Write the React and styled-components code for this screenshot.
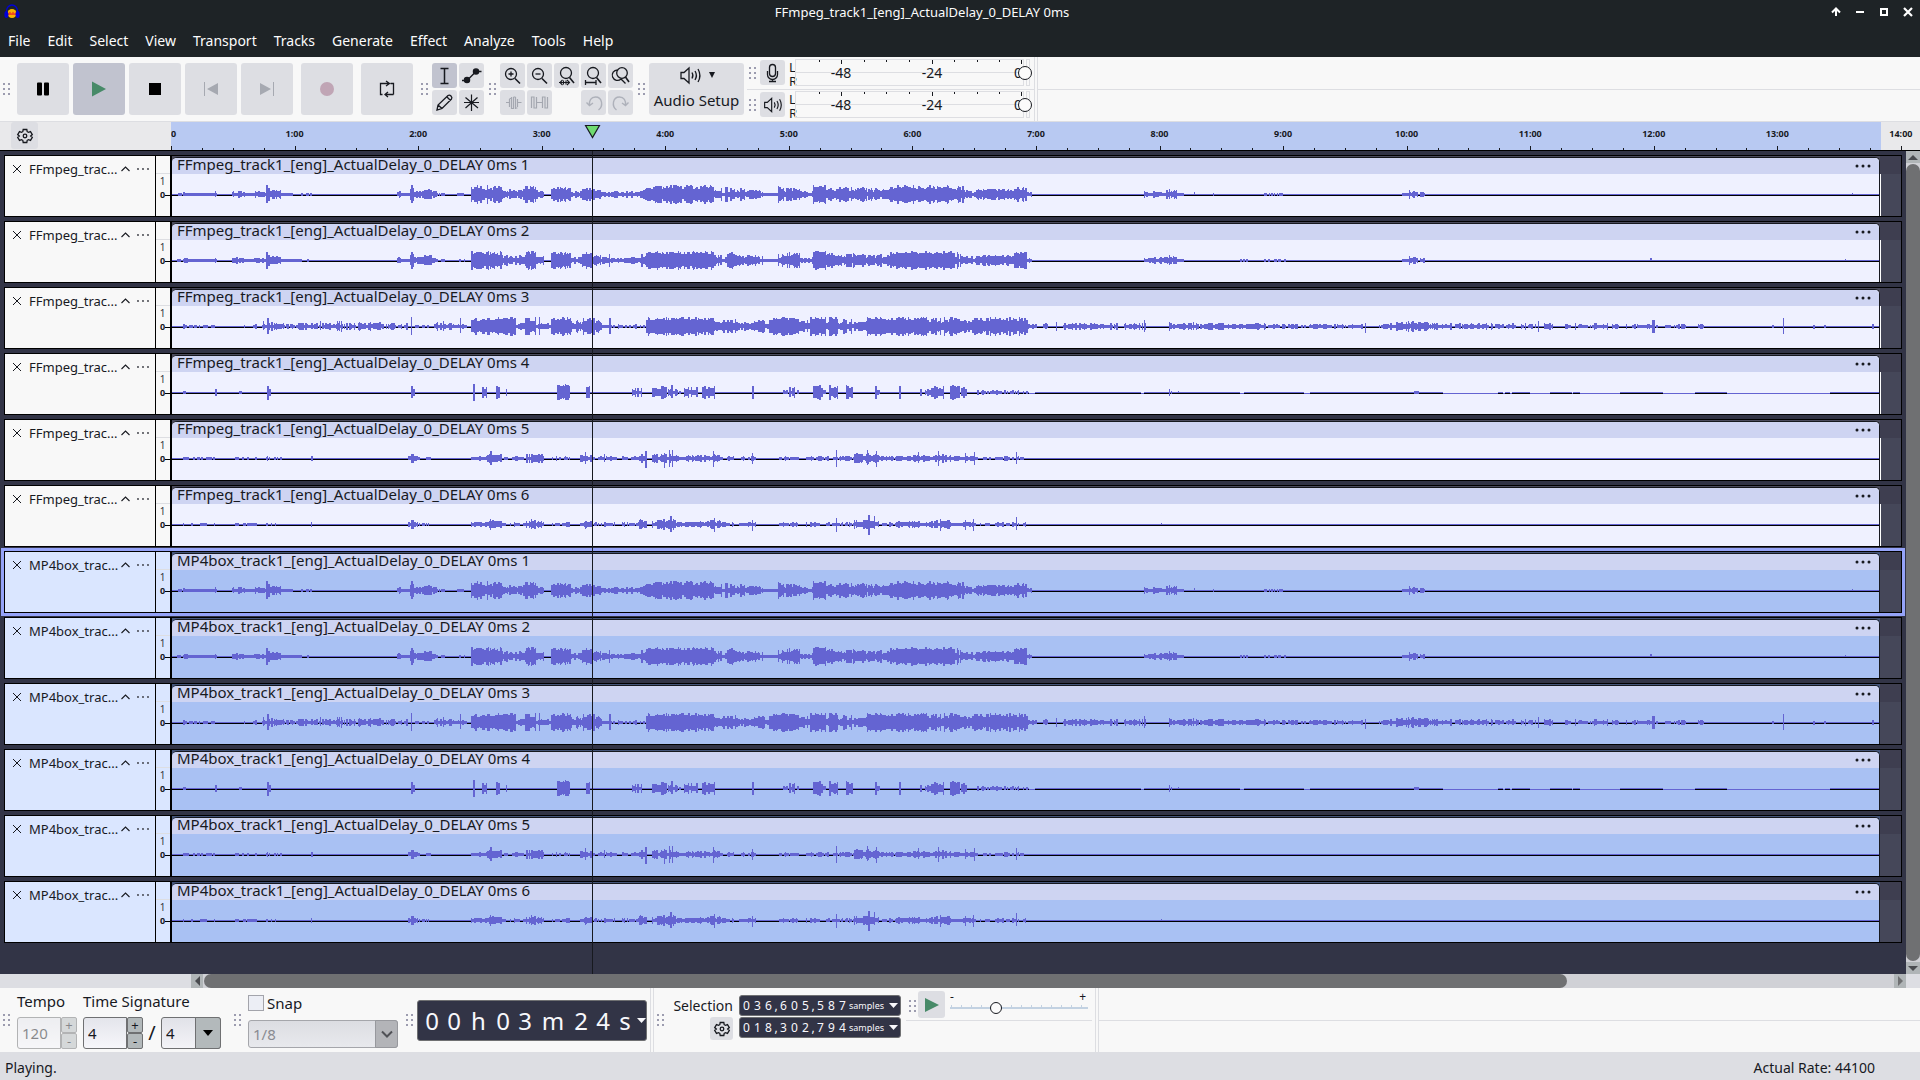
import React from "react";
import styled, { createGlobalStyle, css } from "styled-components";

const FONT = '"Noto Sans", "Open Sans", sans-serif';

const GlobalStyle = createGlobalStyle`
  * { box-sizing: border-box; }
  body { margin: 0; font-family: ${FONT}; font-size: 15px; color: #17191f; background: #f8f8f8; }
  button, input, select { font: inherit; color: inherit; margin: 0; padding: 0; border: 0; background: none; border-radius: 0; }
  svg { display: block; }
`;

/* ---------- window frame ---------- */

const Window = styled.div`
  display: flex;
  flex-direction: column;
  height: 100vh;
  overflow: hidden;
`;

const TitleBar = styled.header`
  display: flex;
  align-items: center;
  height: 24px;
  padding-left: 4px;
  background: #1e2326;
  color: #fcfcfc;
`;

const WindowTitle = styled.h1`
  flex: 1;
  margin: 0;
  font-size: 13px;
  line-height: 24px;
  font-weight: 400;
  text-align: center;
`;

const WindowButtons = styled.div`
  display: flex;
`;

const WindowButton = styled.button`
  display: grid;
  place-items: center;
  width: 24px;
  height: 24px;
`;

const MenuBar = styled.nav`
  display: flex;
  gap: 17px;
  height: 33px;
  padding: 0 8px;
  background: #1e2326;
  color: #fcfcfc;
`;

const MenuItem = styled.button`
  font-size: 14px;
  line-height: 33px;
`;

/* ---------- toolbars ---------- */

const Toolbars = styled.section`
  display: flex;
  height: 65px;
  background: #f8f8f8;
  border-bottom: 1px solid #dddee2;
`;

const GripBox = styled.span`
  display: grid;
  grid-template-columns: 2px 2px;
  grid-auto-rows: 2px;
  gap: 3px;
  flex: none;
  align-self: center;
  i { background: #9c9caf; }
`;

const Grip = () => (
  <GripBox aria-hidden="true">
    <i /><i /><i /><i /><i /><i />
  </GripBox>
);

const ToolGroup = styled.div`
  display: flex;
  align-items: center;
  gap: ${(p) => p.$gap || 7}px;
  padding-left: ${(p) => p.$left || 3}px;
`;

const ButtonRow = styled.div`
  display: flex;
  gap: ${(p) => p.$gap}px;
`;

const PadButton = styled.button`
  display: grid;
  place-items: center;
  flex: none;
  width: ${(p) => p.$size}px;
  height: ${(p) => p.$size}px;
  background: ${(p) => (p.$on ? "#c1c3cf" : "#dddee3")};
  border-radius: 3px;
`;

const ToolGrid = styled.div`
  display: grid;
  grid-template-columns: repeat(${(p) => p.$cols}, 25px);
  gap: 2px;
`;

const AudioSetup = styled.button`
  display: flex;
  flex-direction: column;
  align-items: center;
  justify-content: space-between;
  width: 95px;
  height: 52px;
  padding: 2px 0 3px;
  background: #dddee3;
  border-radius: 3px;
  font-size: 15px;
  line-height: 24px;
`;

const AudioIcons = styled.span`
  display: flex;
  align-items: center;
  gap: 6px;
  height: 20px;
`;

const MeterColumn = styled.div`
  display: flex;
  flex-direction: column;
  margin-left: 3px;
  border-right: 1px solid #dddee2;
`;

const MeterRow = styled.div`
  display: flex;
  align-items: center;
  gap: 4px;
  height: ${(p) => (p.$top ? 33 : 31)}px;
  padding: 0 4px ${(p) => (p.$top ? 1 : 2)}px 2px;
  border-bottom: ${(p) => (p.$top ? "1px solid #dddee2" : "0")};
`;

const Channels = styled.span`
  display: flex;
  flex-direction: column;
  width: 6px;
  padding-top: 2px;
  font-size: 13px;
  line-height: 14px;
`;

const MeterBox = styled.div`
  display: grid;
  grid-template-columns: 229px 4px;
  column-gap: 2px;
  height: 27px;
  & > * { border: 1px solid #dddee2; }
`;

const MeterScale = styled.div`
  display: grid;
  svg, div { grid-area: 1 / 1; }
`;

const MeterLabels = styled.div`
  display: flex;
  padding-left: 25px;
  line-height: 25px;
  font-size: 14px;
  span { width: 40px; margin-right: 51px; text-align: center; }
  span:last-child { width: 10px; margin-right: 0; margin-left: 10px; }
`;

const MeterGroup = styled.div`
  display: grid;
  & > * { grid-area: 1 / 1; }
`;

const GainSlider = styled.input`
  appearance: none;
  align-self: center;
  justify-self: end;
  width: 237px;
  height: 14px;
  margin-right: -2px;
  &::-webkit-slider-thumb {
    appearance: none;
    width: 14px;
    height: 14px;
    border: 1px solid #17191f;
    border-radius: 50%;
    background: #fbfbfb;
  }
`;

const Filler = styled.div`
  flex: 1;
  margin-left: ${(p) => (p.$flush ? 0 : 2)}px;
  border-left: ${(p) => (p.$flush ? 0 : 1)}px solid #dddee2;
  background: linear-gradient(#dddee2, #dddee2) 0 32px / 100% 1px no-repeat;
`;

/* ---------- timeline ---------- */

const Timeline = styled.section`
  display: flex;
  position: relative;
  height: 29px;
  background: #e9e9eb;
  border-bottom: 1px solid #000;
`;

const TimelineCorner = styled.div`
  display: flex;
  align-items: flex-start;
  flex: 0 0 171px;
  padding-left: 11px;
`;

const Ruler = styled.div`
  display: flex;
  flex: 1;
  overflow: hidden;
  background: linear-gradient(to right, #b8c9f2 calc(100% - 39px), #e9e9eb 0);
`;

const Minute = styled.div`
  display: flex;
  flex-direction: column;
  justify-content: space-between;
  flex: 0 0 calc(100% / 14.154);
  font-size: 9px;
  font-weight: 700;
`;

const MinuteLabel = styled.span`
  width: 40px;
  margin-left: -20px;
  line-height: 24px;
  text-align: center;
`;

const FirstLabel = styled(MinuteLabel)`
  margin-left: 0;
  text-align: left;
`;

const Ticks = styled.div`
  display: grid;
  grid-template-columns: repeat(4, 1fr);
  align-items: end;
  height: 5px;
  i { height: 3px; border-left: 1px solid #17191f; }
  i:first-child { height: 5px; }
`;

const playX = css`calc(172px + (100% - 172px) * 0.2403)`;

const PlayHandle = styled.svg`
  position: absolute;
  left: ${playX};
  top: 3px;
  margin-left: -8px;
`;

/* ---------- tracks ---------- */

const TrackArea = styled.main`
  display: flex;
  position: relative;
  flex: 1;
  min-height: 0;
  background: #323446;
`;

const TrackList = styled.div`
  display: flex;
  flex-direction: column;
  gap: 4px;
  flex: 1;
  min-width: 0;
  padding: 4px;
  overflow: hidden;
`;

const PlayLine = styled.div`
  position: absolute;
  left: ${playX};
  top: 0;
  bottom: 0;
  width: 1px;
  background: #17191f;
`;

const Track = styled.article`
  display: flex;
  flex: none;
  height: 62px;
  border: 1px solid #000;
  box-shadow: ${(p) => (p.$focused ? "0 0 0 3px #95a3f8" : "none")};
`;

const TrackPanel = styled.div`
  display: flex;
  align-items: flex-start;
  flex: 0 0 151px;
  padding: 3px 0 0 5px;
  background: ${(p) => (p.$selected ? "#dae6ff" : "#f8f8f8")};
  border-right: 1px solid #000;
  font-size: 13px;
  line-height: 20px;
`;

const PanelButton = styled.button`
  display: grid;
  place-items: center;
  width: ${(p) => p.$w}px;
  height: 20px;
`;

const TrackName = styled.span`
  width: 92px;
  margin-left: 6px;
  white-space: nowrap;
`;

const VRuler = styled.div`
  display: flex;
  flex-direction: column;
  flex: 0 0 16px;
  padding-top: 17px;
  background: ${(p) => (p.$selected ? "#dae6ff" : "#f8f8f8")};
  border-right: 2px solid #000;
`;

const VOne = styled.span`
  border-top: 1px solid #dddee2;
  padding-right: 1px;
  font-size: 10px;
  line-height: 14px;
  text-align: center;
  color: #33353d;
`;

const VZero = styled.span`
  display: flex;
  align-items: center;
  padding-left: 4px;
  font-size: 9px;
  line-height: 14px;
  font-weight: 700;
  &::after { content: ""; flex: 1; height: 1px; background: #000; }
`;

const ClipLane = styled.div`
  display: flex;
  flex: 1;
  min-width: 0;
  padding-top: 1px;
  background: ${(p) => (p.$selected ? "#45557a" : "#4b4b5c")};
`;

const Clip = styled.div`
  display: flex;
  flex-direction: column;
  flex: 1;
  min-width: 0;
  border: solid #17191f;
  border-width: 1px 1px 0 0;
  border-radius: 5px 5px 0 0;
  overflow: hidden;
  background: ${(p) => (p.$selected ? "#a9c1f3" : "#eff1ff")};
`;

const ClipHeader = styled.div`
  display: flex;
  justify-content: space-between;
  height: 16px;
  padding: 0 7px 0 5px;
  overflow: hidden;
  background: #ced4f2;
  font-size: 15px;
  line-height: 12px;
  white-space: nowrap;
`;

const ClipMenu = styled.button`
  display: grid;
  place-items: center;
  width: 18px;
  height: 16px;
`;

const Void = styled.div`
  flex: 0 0 21px;
  margin-top: -1px;
  background:
    linear-gradient(${(p) => (p.$selected ? "#454759, #454759" : "#ffffff, #ffffff")}) 0 18px / 1px 100% no-repeat,
    linear-gradient(#3e3e50 18px, #454759 0);
`;

const Wave = styled.svg`
  width: 100%;
  height: 42px;
`;

/* ---------- scroll bars ---------- */

const VScroll = styled.div`
  display: flex;
  flex-direction: column;
  gap: 1px;
  flex: 0 0 14px;
  background: #d0d1d6;
`;

const HScroll = styled.div`
  display: flex;
  gap: 1px;
  flex: 0 0 14px;
  padding: 0 14px 0 191px;
  background: linear-gradient(to right, #dddee3 191px, #d0d1d6 0, #d0d1d6 calc(100% - 14px), #dddee3 0);
`;

const ScrollArrow = styled.button`
  display: grid;
  place-items: center;
  flex: 0 0 12px;
  background: #b0b5b7;
`;

const ScrollThumb = styled.div`
  flex: ${(p) => p.$grow || 1};
  border-radius: 7px;
  background: #6f7072;
`;

const ScrollRest = styled.div`
  flex: ${(p) => p.$grow};
`;

/* ---------- bottom bar ---------- */

const BottomBar = styled.section`
  display: flex;
  flex: 0 0 64px;
  background: #f8f8f8;
`;

const Field = styled.div`
  display: flex;
  flex-direction: column;
  gap: 3px;
  padding-bottom: 3px;
  align-self: flex-end;
  font-size: 15px;
  line-height: 26px;
`;

const Inline = styled.div`
  display: flex;
  align-items: center;
  gap: ${(p) => p.$gap || 0}px;
`;

const Spin = styled.div`
  display: grid;
  grid-template-columns: 44px 16px;
  grid-template-rows: 16px 16px;
  opacity: ${(p) => (p.$disabled ? 0.5 : 1)};
`;

const SpinInput = styled.input`
  grid-row: 1 / 3;
  min-width: 0;
  padding-left: 4px;
  border: 1px solid #6f7072;
  border-radius: 3px 0 0 3px;
  background: linear-gradient(#e4e5eb, #f6f6fa);
`;

const SpinButton = styled.button`
  border: 1px solid #6f7072;
  border-radius: 2px;
  background: #b3b9bb;
  font-size: 13px;
  line-height: 12px;
`;

const Slash = styled.span`
  width: 8px;
  font-size: 20px;
  text-align: center;
`;

const Combo = styled.div`
  display: grid;
  width: ${(p) => p.$w}px;
  height: ${(p) => p.$h}px;
  & > * { grid-area: 1 / 1; }
`;

const ComboSelect = styled.select`
  appearance: none;
  padding-left: 4px;
  border: 1px solid ${(p) => (p.disabled ? "#a5a6ab" : "#6f7072")};
  border-radius: 3px;
  background: ${(p) => (p.disabled ? "linear-gradient(#dcdde2, #e8e9ed)" : "linear-gradient(#e1e2e8, #f3f3f7)")};
  color: ${(p) => (p.disabled ? "#8a8b91" : "#17191f")};
  opacity: 1;
`;

const ComboArrow = styled.span`
  display: grid;
  place-items: center;
  justify-self: end;
  width: ${(p) => p.$w}px;
  border: 1px solid ${(p) => (p.$flat ? "#97989d" : "#6f7072")};
  border-radius: 0 3px 3px 0;
  background: ${(p) => (p.$flat ? "#b3b4b8" : "#b3b9bb")};
  pointer-events: none;
`;

const SnapGroup = styled.div`
  display: flex;
  flex-direction: column;
  gap: 8px;
  align-self: flex-end;
  padding-bottom: 4px;
`;

const SnapLabel = styled.label`
  display: flex;
  align-items: center;
  gap: 3px;
  height: 18px;
  font-size: 15px;
`;

const Check = styled.input`
  appearance: none;
  width: 16px;
  height: 16px;
  border: 1px solid #a3a4ab;
  background: #eceef5;
`;

const TimeBox = styled.div`
  display: flex;
  align-items: center;
  align-self: center;
  width: 230px;
  height: 41px;
  padding-left: 3px;
  border: 1px solid #6f7072;
  border-radius: 3px;
  background: #323446;
  color: #f8f8fc;
  font-size: 24px;
  line-height: 39px;
`;

const Cell = styled.span`
  flex: 0 0 ${(p) => p.$w}px;
  text-align: center;
`;

const TimeArrow = styled.button`
  display: grid;
  place-items: center;
  width: 10px;
  height: 100%;
`;

const Divider = styled.div`
  width: 4px;
  margin-left: 3px;
  border: solid #dddee2;
  border-width: 0 1px;
`;

const SelectionGroup = styled.div`
  display: flex;
  align-items: flex-start;
  align-self: flex-start;
  gap: 6px;
  padding-top: 7px;
`;

const SelectionLabels = styled.div`
  display: flex;
  flex-direction: column;
  align-items: flex-end;
  width: 62px;
  font-size: 14px;
  line-height: 22px;
`;

const SampleStack = styled.div`
  display: flex;
  flex-direction: column;
  gap: 1px;
`;

const SampleBox = styled.div`
  display: flex;
  align-items: center;
  width: 162px;
  height: 21px;
  padding: 0 2px 0 1px;
  border: 1px solid #6f7072;
  border-radius: 3px;
  background: #323446;
  color: #f8f8fc;
  font-size: 12px;
  line-height: 19px;
`;

const Unit = styled.span`
  flex: 1;
  padding-left: 1px;
  font-size: 9px;
  line-height: 22px;
`;

const SpeedGroup = styled.div`
  display: flex;
  align-items: flex-start;
  gap: 2px;
  height: 33px;
  margin-left: 5px;
  padding: 3px 4px 0 3px;
  border-bottom: 1px solid #dddee2;
`;

const SpeedSlider = styled.div`
  display: flex;
  flex-direction: column;
  width: 138px;
  margin-left: 3px;
  padding-top: 1px;
`;

const SpeedEnds = styled.div`
  display: flex;
  justify-content: space-between;
  padding-right: 2px;
  font-size: 12px;
  line-height: 10px;
`;

const SpeedInput = styled.input`
  appearance: none;
  width: 100%;
  height: 12px;
  background:
    linear-gradient(#c3d2e2, #c3d2e2) 0 5px / 100% 2px no-repeat,
    repeating-linear-gradient(to right, #c3d2e2 0 1px, transparent 1px 10px) 1px 3px / 100% 3px no-repeat;
  &::-webkit-slider-thumb {
    appearance: none;
    width: 12px;
    height: 12px;
    border: 1px solid #17191f;
    border-radius: 50%;
    background: #fbfbfb;
  }
`;

const StatusBar = styled.footer`
  display: flex;
  justify-content: space-between;
  flex: 0 0 28px;
  padding: 3px 45px 0 5px;
  background: #dddee3;
  font-size: 14px;
  line-height: 25px;
`;

/* ---------- icons ---------- */

const Line = ({ s = 25, c = "#17191f", w = 1.3, children }) => (
  <svg width={s} height={s} viewBox={`0 0 ${s} ${s}`} fill="none" stroke={c} strokeWidth={w}>
    {children}
  </svg>
);

const Lens = () => <><circle cx="12" cy="10" r="5.5" /><path d="M15.5 14.5L20 20" strokeWidth="1.6" /></>;

const ICONS = {
  ibeam: <Line w={1.5}><path d="M8.5 5.5h8M8.5 20.5h8M12.5 5.5v15" /></Line>,
  envelope: <Line><path d="M3 17.5h5L17 8.5h5.5" /><circle cx="8" cy="17" r="2.6" fill="#17191f" /><circle cx="17" cy="8.5" r="2.6" fill="#17191f" /></Line>,
  pencil: <Line><path d="M5 20l1-5L16 5.5q1.5-1 3 .5t.5 3L10 18.5zM6 15l4 3.5M15 7l3.5 3.5" /></Line>,
  star: <Line w={1.2}><path d="M12.5 4.5v16.5M5 12.5h15M6.5 7.5l12.5 10.5M18.5 7.5L6.5 18" /></Line>,
  zoomIn: <Line><circle cx="11" cy="11" r="5.5" /><path d="M15 15.5l5 5" strokeWidth="1.6" /><path d="M11 8.5v5M8.5 11h5" /></Line>,
  zoomOut: <Line><circle cx="11" cy="11" r="5.5" /><path d="M15 15.5l5 5" strokeWidth="1.6" /><path d="M8.5 11h5" /></Line>,
  zoomSel: <Line><Lens /><path d="M5 19.5h11M8.5 17l-2.5 2.5 2.5 2.5M13 17l2.5 2.5L13 22M9.5 17.5v4M12 17.5v4" strokeWidth="1.1" /></Line>,
  zoomFit: <Line><Lens /><path d="M4.5 19.5H15M4.5 17v5M15 17v5" /></Line>,
  zoomToggle: <Line><circle cx="14" cy="10" r="5.3" /><path d="M17.5 14l3.5 5" strokeWidth="1.6" /><path d="M9.5 7A5.200 5.200 0 1 0 13 16l4.5 4.5" /></Line>,
  trim: <Line c="#a4a7b0" w={1.2}><path d="M6 12.5h3.5M18 12.5h3.5M9.5 9v8M11.5 7v12M13.5 7v12M15.5 7v12M17.5 9v8M9.5 8.5h2M13.5 7h2M11.5 18.5h2M15.5 18h2" /></Line>,
  silence: <Line c="#a4a7b0" w={1.2}><path d="M4.5 18V7h2.5v11h2.5V7M9.500 12.500h6M15.500 18V7h2.500v11h2.500V7" /></Line>,
  undo: <Line c="#aeb1ba" w={1.4}><path d="M17.5 20c5-3.5 4-13-3-13-4.5 0-6.5 3.5-6 8M5.5 12.5l3 3 3.5-2.5" /></Line>,
  redo: <Line c="#aeb1ba" w={1.4}><path d="M8.5 20c-5-3.5-4-13 3-13 4.5 0 6.5 3.5 6 8M20.5 12.5l-3 3-3.5-2.5" /></Line>,
  mic: <Line><rect x="9.5" y="4.5" width="6" height="12" rx="3" /><path d="M7.5 11v3.5a5 5 0 0 0 10 0V11M12.5 19.5v2M9 21.5h7" /></Line>,
  gear: (
    <Line s={20} w={1.3}>
      <circle cx="10" cy="10" r="1.8" />
      <path d="M8.2 3.5h3.6l.4 2.2 1.3.7 2-.8 1.8 3-1.6 1.4 1.6 1.4-1.8 3-2-.8-1.3.7-.4 2.2H8.2l-.4-2.2-1.3-.7-2 .8-1.8-3L4.300 10 2.700 8.600l1.800-3 2 .8 1.300-.7z" />
    </Line>
  ),
};

const Speaker = ({ s = 25 }) => (
  <svg width={s} height={s} viewBox="0 0 25 25" fill="none" stroke="#17191f" strokeWidth="1.3">
    <path d="M3 9.5h3l5-4.5v15l-5-4.5H3zM14 9.5q1.8 3 0 6M17 8q2.8 4.5 0 9M20 6q3.8 6.5 0 13" />
  </svg>
);

const Triangle = ({ w, h, d, c = "#17191f" }) => (
  <svg width={w} height={h} viewBox={`0 0 ${w} ${h}`}>
    <path d={d} fill={c} />
  </svg>
);

const Down = ({ w = 10, h = 6, c }) => <Triangle w={w} h={h} c={c} d={`M0 0H${w}L${w / 2} ${h}z`} />;

const TRANSPORT = [
  ["Pause", <Triangle w={12} h={14} c="#000" d="M0 1.5q0-1 1-1h3q1 0 1 1v11q0 1-1 1H1q-1 0-1-1zM7 1.5q0-1 1-1h3q1 0 1 1v11q0 1-1 1H8q-1 0-1-1z" />],
  ["Play", <Triangle w={14} h={16} c="#478a68" d="M0 0.5L14 8 0 15.5z" />, true],
  ["Stop", <Triangle w={12} h={12} c="#000" d="M0 0h12v12H0z" />],
  ["Skip to Start", <Triangle w={14} h={14} c="#a6a9b1" d="M0 0h1v14H0zM14 1v12L3 7z" />],
  ["Skip to End", <Triangle w={14} h={14} c="#a6a9b1" d="M13 0h1v14h-1zM0 1v12l11-6z" />],
];

const LoopIcon = () => (
  <Line s={20} w={1.3}>
    <path d="M6.5 4.5h-3v11h2M8 15.5h8.5M13.5 4.5h3v11M6.5 4.5h6M9 2l3.5 2.5L9 7M11 13l-3 2.5 3 2.5" />
  </Line>
);

/* ---------- waveform data ----------
   spans:  [from column, to column, quiet level, loud level]
   spikes: [column, rise, fall, width]
   silent: [from column, to column]                         */

const START = 172;
const COLUMNS = 1707;

const FRONT_LEFT = {
  seed: 7,
  spans: [
    [176, 182, 0, 1], [183, 187, 1, 2], [188, 216, 1, 1], [232, 244, 1, 3], [245, 253, 1, 1], [254, 259, 1, 3], [260, 265, 1, 2],
    [266, 269, 4, 7], [270, 275, 2, 4], [276, 280, 3, 4], [281, 292, 1, 1], [298, 312, 0, 1], [397, 400, 2, 3], [401, 409, 1, 1],
    [410, 413, 4, 6], [414, 421, 2, 3],
    [422, 431, 3, 5], [432, 436, 1, 3], [437, 444, 0, 1], [456, 464, 0, 1],
    [471, 502, 4, 9], [503, 524, 2, 5], [525, 535, 4, 9], [536, 543, 2, 4], [551, 570, 4, 8], [571, 581, 1, 3], [582, 592, 4, 8],
    [593, 600, 3, 5], [601, 640, 1, 3], [641, 645, 3, 6], [646, 713, 5, 9], [714, 721, 2, 7], [722, 724, 1, 1], [725, 733, 2, 8],
    [734, 741, 2, 7], [742, 756, 2, 5], [757, 762, 1, 4], [763, 777, 1, 1], [778, 799, 2, 8], [800, 812, 1, 3], [813, 825, 7, 9],
    [826, 865, 3, 7], [866, 889, 2, 6], [890, 954, 5, 9], [955, 968, 1, 8], [969, 975, 1, 4], [976, 1013, 3, 5], [1014, 1026, 4, 8],
    [1027, 1031, 1, 2], [1144, 1165, 1, 3], [1166, 1176, 2, 4], [1177, 1183, 1, 1], [1264, 1285, 0, 1], [1402, 1408, 1, 1],
    [1409, 1412, 1, 2], [1413, 1417, 2, 3], [1420, 1424, 1, 2],
  ],
  spikes: [[215, 3, 2], [266, 9, 8, 2], [411, 9, 8, 2], [1169, 5, 4], [1194, 2, 0], [1213, 1, 1], [1409, 4, 4], [1852, 1, 0]],
};

const FRONT_RIGHT = {
  seed: 23,
  spans: FRONT_LEFT.spans.map(([a, b, lo, hi]) => [a, b, lo > 3 ? lo + 1 : lo, hi]).concat([[282, 300, 1, 1], [1238, 1247, 0, 1]]),
  spikes: [[215, 2, 2], [266, 8, 8, 2], [411, 8, 8, 2], [609, 6, 6], [1169, 5, 4], [1409, 4, 4], [1650, 2, 0, 2], [1845, 1, 0]],
};

const CENTER = {
  seed: 41,
  spans: [
    [183, 186, 1, 2], [187, 216, 0, 1], [240, 244, 0, 1], [253, 256, 1, 4], [262, 275, 1, 4], [276, 318, 0, 3], [319, 336, 0, 3],
    [337, 342, 1, 5], [343, 357, 0, 3], [358, 380, 1, 4], [381, 407, 0, 3], [413, 433, 0, 1], [434, 448, 0, 4], [449, 466, 0, 3],
    [471, 515, 5, 9], [516, 524, 1, 4], [525, 535, 3, 9], [536, 550, 1, 3], [551, 570, 6, 9], [571, 582, 2, 6], [583, 594, 5, 9],
    [595, 601, 3, 6], [602, 611, 1, 2], [612, 645, 0, 2], [646, 713, 6, 9], [714, 720, 3, 6], [721, 735, 3, 8], [736, 750, 2, 4],
    [751, 768, 2, 8], [769, 780, 5, 8], [781, 798, 6, 9], [799, 809, 1, 6], [810, 825, 6, 9], [826, 828, 2, 4], [829, 837, 7, 9],
    [838, 866, 2, 7], [867, 926, 6, 9], [927, 948, 3, 9], [949, 959, 6, 9], [960, 966, 2, 8], [967, 971, 2, 5], [972, 1027, 5, 9],
    [1028, 1036, 1, 2], [1043, 1047, 1, 3], [1063, 1117, 0, 3], [1123, 1145, 0, 3], [1169, 1193, 1, 4], [1194, 1209, 0, 3],
    [1210, 1223, 1, 4], [1224, 1250, 1, 2], [1251, 1293, 0, 3], [1294, 1365, 0, 2], [1379, 1395, 0, 3], [1396, 1427, 2, 5],
    [1428, 1434, 1, 3], [1435, 1515, 0, 3], [1520, 1535, 0, 3], [1544, 1552, 1, 3], [1565, 1607, 0, 3], [1612, 1619, 0, 2],
    [1632, 1658, 0, 2], [1665, 1685, 0, 2], [1698, 1703, 1, 2],
  ],
  spikes: [
    [263, 5, 3], [267, 8, 7, 2], [320, 5, 3], [337, 5, 4], [411, 9, 8], [443, 5, 4], [460, 8, 6], [539, 9, 8], [609, 8, 7, 2], [1056, 4, 4],
    [1144, 6, 5], [1365, 3, 6], [1538, 5, 5], [1652, 6, 6, 3], [1626, 2, 2], [1772, 1, 1, 2], [1783, 8, 7], [1813, 1, 2, 2],
    [1824, 1, 1, 2], [1872, 2, 2, 2],
  ],
};

const BASS = {
  seed: 59,
  spans: [
    [183, 185, 1, 1], [208, 210, 0, 1], [239, 241, 1, 1], [482, 486, 3, 6], [496, 499, 4, 6], [557, 569, 6, 7], [586, 589, 4, 6],
    [632, 641, 1, 4], [652, 660, 2, 5], [661, 666, 5, 6], [668, 672, 2, 4], [673, 680, 0, 3], [684, 697, 1, 5], [702, 714, 3, 6],
    [783, 798, 0, 5], [813, 820, 6, 7], [821, 825, 2, 5], [829, 837, 3, 7], [846, 852, 3, 7], [876, 879, 2, 3], [920, 926, 0, 3],
    [927, 943, 2, 6], [950, 959, 4, 7], [961, 966, 2, 6], [974, 1027, 0, 2], [1412, 1424, 0, 1],
  ],
  spikes: [
    [215, 3, 3, 2], [267, 6, 7, 2], [269, 3, 3, 2], [411, 6, 5, 2], [413, 3, 3, 2], [473, 8, 8, 2], [506, 3, 3], [565, 8, 7],
    [671, 7, 5, 2], [752, 6, 6, 2], [875, 6, 6, 2], [899, 6, 6, 2], [1169, 3, 3], [1171, 1, 1], [1178, 1, 0],
  ],
  silent: [
    [1029, 1035], [1141, 1144], [1240, 1244], [1304, 1310], [1443, 1498], [1503, 1505], [1510, 1512], [1530, 1550], [1572, 1573],
    [1580, 1620], [1663, 1695], [1727, 1830],
  ],
};

const SURROUND_SPANS = [
  [183, 216, 0, 1], [235, 256, 0, 1], [266, 282, 0, 1], [408, 413, 1, 3], [414, 417, 1, 3], [418, 430, 0, 1], [471, 486, 1, 2],
  [487, 501, 2, 4], [502, 510, 0, 1], [511, 525, 0, 2], [526, 543, 1, 4], [552, 569, 0, 2], [580, 592, 1, 3], [593, 617, 0, 2],
  [622, 638, 0, 2], [639, 646, 1, 5], [652, 677, 1, 5], [678, 706, 1, 3], [707, 720, 1, 4], [721, 733, 0, 2], [739, 755, 0, 2],
  [779, 798, 0, 2], [806, 853, 0, 2], [854, 878, 2, 5], [879, 895, 0, 2], [896, 930, 1, 3], [931, 950, 1, 4], [951, 975, 1, 2],
  [976, 990, 0, 1], [995, 1025, 0, 2],
];

const SURROUND_LEFT = {
  seed: 83,
  spans: SURROUND_SPANS,
  spikes: [
    [311, 2, 2, 2], [267, 2, 2], [411, 4, 4, 3], [490, 7, 6, 2], [531, 4, 4, 2], [585, 6, 5], [604, 4, 3], [645, 7, 9, 2], [664, 5, 9],
    [669, 8, 8], [672, 8, 8], [713, 7, 8], [752, 5, 5], [836, 8, 8], [867, 8, 6], [876, 7, 8], [918, 6, 4], [938, 7, 7], [965, 5, 4],
    [974, 6, 6], [1016, 6, 5],
  ],
};

const SURROUND_RIGHT = {
  seed: 101,
  spans: SURROUND_SPANS,
  spikes: [
    [311, 2, 2], [411, 4, 4, 3], [490, 5, 5], [531, 5, 4], [585, 3, 4], [640, 5, 4], [670, 8, 7, 2], [714, 6, 7], [752, 4, 6],
    [836, 6, 7], [868, 9, 10, 2], [874, 8, 4], [940, 5, 6], [965, 4, 5], [973, 5, 6], [1016, 7, 5], [1161, 1, 0],
  ],
};

function wavePaths({ seed, spans, spikes, silent = [] }) {
  let state = seed;
  const random = () => {
    state = (state * 16807) % 2147483647;
    return state / 2147483647;
  };
  for (let i = 0; i < 5; i += 1) random();
  let wave = "";
  const bar = (x, up, down, width = 1) => {
    wave += `M${x} ${20 - up}h${width}v${up + down + 1}h-${width}z`;
  };
  spans.forEach(([from, to, lo, hi]) => {
    let x = from;
    while (x <= to) {
      const width = Math.min(1 + Math.floor(random() * 2), to - x + 1);
      const level = Math.round(lo + (hi - lo) * random());
      if (level > 0) bar(x, level, Math.max(1, level - (random() < 0.3 ? 1 : 0)), width);
      x += width;
    }
  });
  spikes.forEach(([x, up, down, width]) => bar(x, up, down, width));

  let zero = "";
  let hush = "";
  let x = START;
  silent.concat([[START + COLUMNS, 0]]).forEach(([from, to]) => {
    zero += `M${x} 0H${from}V1H${x}z`;
    if (to) hush += `M${from} 21H${to}V22H${from}z`;
    x = to;
  });
  return { wave: wave + hush, zero };
}

const CHANNELS = [FRONT_LEFT, FRONT_RIGHT, CENTER, BASS, SURROUND_LEFT, SURROUND_RIGHT].map(wavePaths);

const TRACKS = ["FFmpeg", "MP4box"].flatMap((tool, group) =>
  CHANNELS.map((paths, i) => ({
    short: `${tool}_trac...`,
    title: `${tool}_track1_[eng]_ActualDelay_0_DELAY 0ms ${i + 1}`,
    selected: group === 1,
    focused: group === 1 && i === 0,
    paths,
  }))
);

const Dots = ({ r = 1.5, gap = 6, c = "#17191f" }) => (
  <svg width={gap * 2 + 4} height="4" viewBox={`0 0 ${gap * 2 + 4} 4`} fill={c}>
    <circle cx="2" cy="2" r={r} /><circle cx={2 + gap} cy="2" r={r} /><circle cx={2 + gap * 2} cy="2" r={r} />
  </svg>
);

const TrackRow = ({ track }) => (
  <Track $focused={track.focused}>
    <TrackPanel $selected={track.selected}>
      <PanelButton $w={13} aria-label="Close track">
        <Line s={10} w={1}><path d="M1 1l8 8M9 1l-8 8" /></Line>
      </PanelButton>
      <TrackName>{track.short}</TrackName>
      <PanelButton $w={9} aria-label="Collapse track">
        <Line s={9} w={1.1}><path d="M.5 6l4-4 4 4" /></Line>
      </PanelButton>
      <PanelButton $w={25} aria-label="Track menu"><Dots r={0.9} gap={5} c="#33353d" /></PanelButton>
    </TrackPanel>
    <VRuler $selected={track.selected}>
      <VOne>1</VOne>
      <VZero>0</VZero>
    </VRuler>
    <ClipLane $selected={track.selected}>
      <Clip $selected={track.selected}>
        <ClipHeader>
          <span>{track.title}</span>
          <ClipMenu aria-label="Clip menu"><Dots /></ClipMenu>
        </ClipHeader>
        <Wave viewBox={`${START} 0 ${COLUMNS} 42`} preserveAspectRatio="none" shapeRendering="crispEdges">
          <path d={track.paths.zero} fill="#6464d2" transform="translate(0 20)" />
          <path d={track.paths.zero} fill="#000" transform="translate(0 21)" />
          <path d={track.paths.wave} fill="#6464d2" />
        </Wave>
      </Clip>
      <Void $selected={track.selected} />
    </ClipLane>
  </Track>
);

const METER_TICKS = [24, 46, 69, 91, 114, 137, 159, 182, 204, 226];

const Meter = ({ label, icon, top }) => (
  <MeterRow $top={top}>
    <Grip />
    <PadButton $size={25} aria-label={label}>{icon}</PadButton>
    <Inline>
      <Channels><span>L</span><span>R</span></Channels>
      <MeterGroup>
        <MeterBox>
          <MeterScale>
            <svg width="227" height="25" shapeRendering="crispEdges">
              <path d="M0 12.5H227" stroke="#dddee2" />
              <path d={METER_TICKS.map((x, i) => `M${x - 0.5} 0v${i % 4 === 1 || i === 9 ? 4 : 2}`).join("")} stroke="#17191f" />
            </svg>
            <MeterLabels><span>-48</span><span>-24</span><span>0</span></MeterLabels>
          </MeterScale>
          <div />
        </MeterBox>
        <GainSlider type="range" aria-label={`${label} volume`} defaultValue="100" />
      </MeterGroup>
    </Inline>
  </MeterRow>
);

const MENUS = ["File", "Edit", "Select", "View", "Transport", "Tracks", "Generate", "Effect", "Analyze", "Tools", "Help"];

const TIME = [["0", 22], ["0", 22], ["h", 27], ["0", 22], ["3", 22], ["m", 34], ["2", 22], ["4", 22], ["s", 22]];

const Samples = ({ value }) => (
  <SampleBox>
    {value.split("").map((ch, i) => <Cell key={i} $w={ch === "," ? 4 : 11}>{ch}</Cell>)}
    <Unit>samples</Unit>
    <TimeArrow aria-label="Format"><Down w={9} h={5} c="#f8f8fc" /></TimeArrow>
  </SampleBox>
);

const Tool = ({ name, icon, on }) => <PadButton $size={25} $on={on} aria-label={name}>{ICONS[icon]}</PadButton>;

export default function App() {
  return (
    <Window>
      <GlobalStyle />
      <TitleBar>
        <svg width="16" height="16" viewBox="0 0 16 16">
          <path d="M2.5 9V7a5.5 6 0 0 1 11 0v2" fill="none" stroke="#0000d8" strokeWidth="1.3" />
          <circle cx="8" cy="9.5" r="4.5" fill="#f7b500" />
          <path d="M4 9.5l2-2 1.5 2 1.5-2 1.5 2L12 8v3H4z" fill="#f2491b" />
          <ellipse cx="2.4" cy="10.5" rx="2" ry="3.5" fill="#0000d8" />
          <ellipse cx="13.6" cy="10.5" rx="2" ry="3.5" fill="#0000d8" />
        </svg>
        <WindowTitle>FFmpeg_track1_[eng]_ActualDelay_0_DELAY 0ms</WindowTitle>
        <WindowButtons>
          <WindowButton aria-label="Keep above"><Line s={10} c="#fff" w={2}><path d="M5 9V2M1 5.5l4-4 4 4" /></Line></WindowButton>
          <WindowButton aria-label="Minimize"><Line s={10} c="#fff" w={2}><path d="M1 5h8" /></Line></WindowButton>
          <WindowButton aria-label="Maximize"><Line s={10} c="#fff" w={2}><path d="M2 2h6v6H2z" /></Line></WindowButton>
          <WindowButton aria-label="Close"><Line s={10} c="#fff" w={2.2}><path d="M1 1l8 8M9 1L1 9" /></Line></WindowButton>
        </WindowButtons>
      </TitleBar>
      <MenuBar>{MENUS.map((m) => <MenuItem key={m}>{m}</MenuItem>)}</MenuBar>

      <Toolbars>
        <ToolGroup>
          <Grip />
          <ButtonRow $gap={8}>
            <ButtonRow $gap={4}>
              {TRANSPORT.map(([name, icon, on]) => (
                <PadButton key={name} $size={52} $on={on} aria-label={name}>{icon}</PadButton>
              ))}
            </ButtonRow>
            <PadButton $size={52} aria-label="Record">
              <svg width="14" height="14"><circle cx="7" cy="7" r="7" fill="#c0a5b5" /></svg>
            </PadButton>
            <PadButton $size={52} aria-label="Loop"><LoopIcon /></PadButton>
          </ButtonRow>
        </ToolGroup>
        <ToolGroup $left={8} $gap={4}>
          <Grip />
          <ToolGrid $cols={2}>
            <Tool name="Selection tool" icon="ibeam" on />
            <Tool name="Envelope tool" icon="envelope" />
            <Tool name="Draw tool" icon="pencil" />
            <Tool name="Multi-tool" icon="star" />
          </ToolGrid>
        </ToolGroup>
        <ToolGroup $left={5} $gap={4}>
          <Grip />
          <ToolGrid $cols={5}>
            <Tool name="Zoom in" icon="zoomIn" />
            <Tool name="Zoom out" icon="zoomOut" />
            <Tool name="Fit selection" icon="zoomSel" />
            <Tool name="Fit project" icon="zoomFit" />
            <Tool name="Zoom toggle" icon="zoomToggle" />
            <Tool name="Trim" icon="trim" />
            <Tool name="Silence" icon="silence" />
            <span />
            <Tool name="Undo" icon="undo" />
            <Tool name="Redo" icon="redo" />
          </ToolGrid>
        </ToolGroup>
        <ToolGroup $left={5} $gap={4}>
          <Grip />
          <AudioSetup>
            <AudioIcons><Speaker /><Down w={6} h={6} /></AudioIcons>
            Audio Setup
          </AudioSetup>
        </ToolGroup>
        <MeterColumn>
          <Meter label="Record meter" icon={ICONS.mic} top />
          <Meter label="Playback meter" icon={<Speaker s={22} />} />
        </MeterColumn>
        <Filler />
      </Toolbars>

      <Timeline>
        <TimelineCorner>
          <PadButton $size={27} aria-label="Timeline options">{ICONS.gear}</PadButton>
        </TimelineCorner>
        <Ruler>
          {Array.from({ length: 15 }, (_, i) => (
            <Minute key={i}>
              {i === 0 ? <FirstLabel>0</FirstLabel> : <MinuteLabel>{i}:00</MinuteLabel>}
              <Ticks><i /><i /><i /><i /></Ticks>
            </Minute>
          ))}
        </Ruler>
        <PlayHandle width="17" height="14" viewBox="0 0 17 14">
          <path d="M1.5 .5h14L8.5 12.5z" fill="#6fdb70" stroke="#17191f" strokeWidth="1.2" />
        </PlayHandle>
      </Timeline>

      <TrackArea>
        <TrackList>{TRACKS.map((t) => <TrackRow key={t.title} track={t} />)}</TrackList>
        <VScroll>
          <ScrollArrow aria-label="Scroll up"><Triangle w={10} h={5} c="#4a4c50" d="M0 5h10L5 0z" /></ScrollArrow>
          <ScrollThumb />
          <ScrollArrow aria-label="Scroll down"><Down w={10} h={5} c="#4a4c50" /></ScrollArrow>
        </VScroll>
        <PlayLine />
      </TrackArea>
      <HScroll>
        <ScrollArrow aria-label="Scroll left"><Triangle w={5} h={10} c="#4a4c50" d="M5 0v10L0 5z" /></ScrollArrow>
        <ScrollThumb $grow={1364} />
        <ScrollRest $grow={325} />
        <ScrollArrow aria-label="Scroll right"><Triangle w={5} h={10} c="#6f7072" d="M0 0v10l5-5z" /></ScrollArrow>
      </HScroll>

      <BottomBar>
        <ToolGroup>
          <Grip />
          <Inline $gap={6}>
            <Field>
              <label htmlFor="tempo">Tempo</label>
              <Spin $disabled>
                <SpinInput id="tempo" defaultValue="120" disabled />
                <SpinButton disabled>+</SpinButton>
                <SpinButton disabled>-</SpinButton>
              </Spin>
            </Field>
            <Field>
              <label htmlFor="beats">Time Signature</label>
              <Inline $gap={5}>
                <Spin>
                  <SpinInput id="beats" defaultValue="4" />
                  <SpinButton>+</SpinButton>
                  <SpinButton>-</SpinButton>
                </Spin>
                <Slash>/</Slash>
                <Combo $w={60} $h={32}>
                  <ComboSelect aria-label="Beat unit"><option>4</option></ComboSelect>
                  <ComboArrow $w={26}><Down w={10} h={6} c="#000" /></ComboArrow>
                </Combo>
              </Inline>
            </Field>
          </Inline>
        </ToolGroup>
        <ToolGroup $left={13}>
          <Grip />
          <SnapGroup>
            <SnapLabel><Check type="checkbox" />Snap</SnapLabel>
            <Combo $w={150} $h={28}>
              <ComboSelect aria-label="Snap to" disabled><option>1/8</option></ComboSelect>
              <ComboArrow $w={23} $flat>
                <Line s={12} w={2} c="#505156"><path d="M1 3.5l5 5 5-5" /></Line>
              </ComboArrow>
            </Combo>
          </SnapGroup>
        </ToolGroup>
        <ToolGroup $left={8} $gap={4}>
          <Grip />
          <TimeBox>
            {TIME.map(([ch, w], i) => <Cell key={i} $w={w}>{ch}</Cell>)}
            <TimeArrow aria-label="Time format"><Down w={9} h={5} c="#f8f8fc" /></TimeArrow>
          </TimeBox>
        </ToolGroup>
        <Divider />
        <ToolGroup $left={3}>
          <Grip />
          <SelectionGroup>
            <SelectionLabels>
              Selection
              <PadButton $size={23} aria-label="Selection options">{ICONS.gear}</PadButton>
            </SelectionLabels>
            <SampleStack>
              <Samples value="036,605,587" />
              <Samples value="018,302,794" />
            </SampleStack>
          </SelectionGroup>
        </ToolGroup>
        <SpeedGroup>
          <Grip />
          <PadButton $size={27} aria-label="Play at speed">
            <Triangle w={14} h={14} c="#478a68" d="M0 0l14 7-14 7z" />
          </PadButton>
          <SpeedSlider>
            <SpeedEnds><span>-</span><span>+</span></SpeedEnds>
            <SpeedInput type="range" aria-label="Playback speed" defaultValue="32" />
          </SpeedSlider>
        </SpeedGroup>
        <Divider />
        <Filler $flush />
      </BottomBar>
      <StatusBar>
        <span>Playing.</span>
        <span>Actual Rate: 44100</span>
      </StatusBar>
    </Window>
  );
}
